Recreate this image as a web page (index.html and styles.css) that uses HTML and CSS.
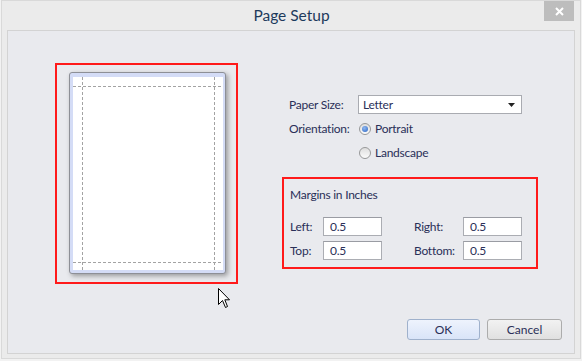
FILE: index.html
```html
<!DOCTYPE html>
<html lang="en">
<head>
    <meta charset="UTF-8">
    <meta name="viewport" content="width=device-width, initial-scale=1.0">
    <title>Page Setup</title>
    <link rel="stylesheet" href="styles.css">
</head>
<body>
    <div class="window">
        <div class="titlebar">
            <span class="title">Page Setup</span>
            <span class="close">
                <svg width="9" height="9" viewBox="0 0 9 9"><path d="M1 1 L8 8 M8 1 L1 8" stroke="#fff" stroke-width="2"/></svg>
            </span>
        </div>
        <div class="panel">
            <div class="main">
                <div class="preview highlight">
                    <div class="paper">
                        <div class="sheet">
                            <svg class="guides" width="150" height="193">
                                <line x1="0" y1="9.5" x2="150" y2="9.5" />
                                <line x1="0" y1="185.5" x2="150" y2="185.5" />
                                <line x1="9.5" y1="0" x2="9.5" y2="193" />
                                <line x1="141.5" y1="0" x2="141.5" y2="193" />
                            </svg>
                        </div>
                    </div>
                </div>
                <div class="settings">
                    <div class="row">
                        <label class="label">Paper Size:</label>
                        <div class="select">
                            <span>Letter</span>
                            <svg width="7" height="4" viewBox="0 0 7 4"><path d="M0 0 H7 L3.5 4 Z" fill="#222"/></svg>
                        </div>
                    </div>
                    <div class="row">
                        <label class="label">Orientation:</label>
                        <span class="radio checked"></span>
                        <span>Portrait</span>
                    </div>
                    <div class="row">
                        <span class="label"></span>
                        <span class="radio"></span>
                        <span>Landscape</span>
                    </div>
                    <div class="margins highlight">
                        <div class="margins-title">Margins in Inches</div>
                        <div class="margins-grid">
                            <label>Left:</label>
                            <div class="field">0.5</div>
                            <span></span>
                            <label>Right:</label>
                            <div class="field">0.5</div>
                            <label>Top:</label>
                            <div class="field">0.5</div>
                            <span></span>
                            <label>Bottom:</label>
                            <div class="field">0.5</div>
                        </div>
                    </div>
                </div>
            </div>
            <div class="footer">
                <button class="btn primary">OK</button>
                <button class="btn">Cancel</button>
            </div>
        </div>
        <svg class="cursor" width="13" height="21" viewBox="0 0 13 21">
            <path d="M0.5 0.5 L0.5 16.5 L4.5 12.5 L7.5 19.5 L9.5 18.5 L6.8 11.8 L11.5 11.8 Z" fill="#fff" stroke="#000" stroke-width="1" stroke-linejoin="miter"/>
        </svg>
    </div>
</body>
</html>
```

FILE: styles.css
```css
* {
    box-sizing: border-box;
}
body {
    margin: 0;
    background: #f2f2f2;
    font-family: Lato, "Noto Sans", sans-serif;
    font-size: 12px;
    letter-spacing: -0.25px;
    color: #2a2f58;
}
.window {
    position: relative;
    margin: 0 1px 2px;
    height: 359px;
    border: 1px solid #d9d9d9;
    background: #ebebeb;
    padding: 0 5px 4px;
    display: flex;
    flex-direction: column;
}
.titlebar {
    height: 29px;
    display: flex;
    align-items: center;
    justify-content: center;
    flex-shrink: 0;
}
.title {
    font-size: 15.5px;
    letter-spacing: 0;
    color: #1d3a5c;
    margin-top: -1px;
    margin-left: 1px;
}
.close {
    position: absolute;
    top: 0;
    right: 6px;
    width: 30px;
    height: 20px;
    background: #bdbdbd;
    display: flex;
    align-items: center;
    justify-content: center;
}
.panel {
    flex: 1;
    border: 1px solid #d3d3d3;
    background: #e9eaee;
    display: flex;
    flex-direction: column;
}
.main {
    display: flex;
    padding: 32px 0 0 47px;
}
.highlight {
    border: 2px solid #ff1a1a;
}
.preview {
    width: 183px;
    height: 221px;
    padding: 7px 10px 8px 12px;
}
.paper {
    width: 157px;
    height: 202px;
    border: 1px solid #8d8f96;
    border-radius: 3px;
    background: #d4dcf6;
    padding: 4px 2px 3px 3px;
    box-shadow: 2px 2px 5px rgba(0, 0, 0, 0.35);
}
.sheet {
    width: 150px;
    height: 193px;
    background: #fff;
}
.guides line {
    stroke: #a3a3a3;
    stroke-width: 1;
    stroke-dasharray: 3 2;
}
.settings {
    margin-left: 44px;
    padding-top: 32px;
    display: flex;
    flex-direction: column;
}
.row {
    display: flex;
    align-items: center;
    height: 19px;
    margin-bottom: 5px;
    padding-left: 7px;
}
.label {
    width: 69px;
    flex-shrink: 0;
}
.select {
    width: 164px;
    height: 19px;
    border: 1px solid #a9abb1;
    background: #fff;
    display: flex;
    align-items: center;
    justify-content: space-between;
    padding: 0 6px 0 4px;
}
.radio {
    width: 12px;
    height: 12px;
    border-radius: 50%;
    border: 1px solid #979899;
    background: linear-gradient(#dedede, #fbfbfb);
    margin: 0 4px 0 1px;
    position: relative;
}
.radio.checked::after {
    content: "";
    position: absolute;
    left: 2px;
    top: 2px;
    width: 6px;
    height: 6px;
    border-radius: 50%;
    background: radial-gradient(circle at 40% 35%, #8fb8f0, #2a64c4);
}
.margins {
    margin-top: 10px;
    width: 256px;
    height: 92px;
    padding: 8px 14px 0 6px;
}
.margins-title {
    line-height: 16px;
    margin-bottom: 14px;
}
.margins-grid {
    display: grid;
    grid-template-columns: 33px 59px 32px 49px 59px;
    row-gap: 5px;
    align-items: center;
}
.field {
    height: 19px;
    border: 1px solid #abadb3;
    border-top-color: #9a9ca3;
    background: #fff;
    padding-left: 6px;
    line-height: 17px;
}
.footer {
    margin-top: auto;
    display: flex;
    justify-content: flex-end;
    gap: 7px;
    padding: 0 12px 13px 0;
}
.btn {
    font: inherit;
    color: #2a2f58;
    width: 75px;
    height: 21px;
    border: 1px solid #acacac;
    border-radius: 3px;
    background: linear-gradient(#f2f2f2, #e0e0e0);
    padding: 0;
}
.btn.primary {
    width: 73px;
    border-color: #9fb1cc;
    background: linear-gradient(#eef3fd, #d9e4f8);
}
.cursor {
    position: absolute;
    left: 216px;
    top: 287px;
}
```
